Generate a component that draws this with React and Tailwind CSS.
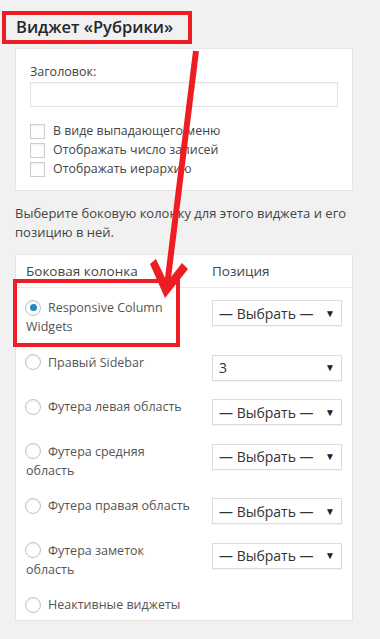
import React from "react";

const rows = [
  { label: "Responsive Column Widgets", checked: true, select: "— Выбрать —" },
  { label: "Правый Sidebar", select: "3" },
  { label: "Футера левая область", select: "— Выбрать —" },
  { label: "Футера средняя область", select: "— Выбрать —" },
  { label: "Футера правая область", select: "— Выбрать —" },
  { label: "Футера заметок область", select: "— Выбрать —" },
  { label: "Неактивные виджеты" },
];

function Checkbox({ label }) {
  return (
    <div className="flex items-center h-[19px]">
      <span className="w-[15px] h-[15px] border border-[#c9cdd0] bg-white shadow-[inset_0_1px_2px_rgba(0,0,0,0.08)] shrink-0" />
      <span className="ml-[8px] text-[12.4px] text-[#444]">{label}</span>
    </div>
  );
}

function Radio({ checked }) {
  return (
    <span className="inline-flex align-middle items-center justify-center w-[16px] h-[16px] rounded-full border border-[#bfc3c6] bg-white shadow-[inset_0_1px_2px_rgba(0,0,0,0.08)] mr-[7px] -ml-[1px] relative -top-[1px]">
      {checked && <span className="w-[7px] h-[7px] rounded-full bg-[#1e8cbe]" />}
    </span>
  );
}

export default function App() {
  return (
    <div
      className="relative w-[380px] h-[639px] bg-[#f1f1f1] overflow-hidden"
      style={{ fontFamily: '"Open Sans", "Noto Sans", sans-serif' }}
    >
      <div className="mt-[11px] ml-[2px] w-[190px] h-[33px] border-4 border-[#ee1d23] flex items-center pl-[10px]">
        <span className="text-[16.5px] font-semibold text-[#23282d] leading-none">Виджет «Рубрики»</span>
      </div>

      <div className="mt-[4px] ml-[15px] w-[338px] h-[143px] bg-white border border-[#e5e5e5] pt-[14px] px-[14px]">
        <div className="text-[12.5px] text-[#444] leading-[18px]">Заголовок:</div>
        <div className="mt-[1px] h-[25px] w-[308px] border border-[#e2e2e2] bg-white shadow-[inset_0_1px_2px_rgba(0,0,0,0.05)]" />
        <div className="mt-[15px] flex flex-col">
          <Checkbox label="В виде выпадающего меню" />
          <Checkbox label="Отображать число записей" />
          <Checkbox label="Отображать иерархию" />
        </div>
      </div>

      <div className="mt-[13px] ml-[15px] w-[340px] text-[13px] leading-[19px] text-[#444]">
        Выберите боковую колонку для этого виджета и его позицию в ней.
      </div>

      <div className="mt-[12px] ml-[15px] w-[338px] h-[367px] bg-white border border-[#e5e5e5]">
        <div className="h-[33px] border-b border-[#ebebeb] flex items-center text-[13.5px] text-[#444]">
          <div className="pl-[10px] w-[196px]">Боковая колонка</div>
          <div>Позиция</div>
        </div>
        <div className="pt-[10px] flex flex-col gap-[16.5px]">
          {rows.map((r, i) => (
            <div key={i} className="flex items-start">
              <div className="pl-[10px] w-[174px] text-[12.5px] leading-[19px] text-[#555]">
                <Radio checked={r.checked} />
                {r.label}
              </div>
              {r.select && (
                <div className="ml-[22px] mt-[2px] w-[130px] h-[26px] border border-[#dcdcdc] bg-white flex items-center justify-between pl-[6px] pr-[6px] shadow-[0_1px_1px_rgba(0,0,0,0.04)]">
                  <span className="text-[14px] text-[#333]">{r.select}</span>
                  <span className="text-[10px] text-[#222]">▼</span>
                </div>
              )}
            </div>
          ))}
        </div>
      </div>

      {/* annotation overlays */}
      <div className="absolute left-[13px] top-[279px] w-[167px] h-[68px] border-4 border-[#ee1d23] pointer-events-none" />
      <svg className="absolute left-0 top-0 pointer-events-none" width="380" height="639" viewBox="0 0 380 639">
        <line x1="196" y1="51" x2="167" y2="286" stroke="#ee1d23" strokeWidth="6" />
        <polygon points="150,264 156,259 167,282 182,263 188,269 165,298" fill="#ee1d23" />
      </svg>
    </div>
  );
}
